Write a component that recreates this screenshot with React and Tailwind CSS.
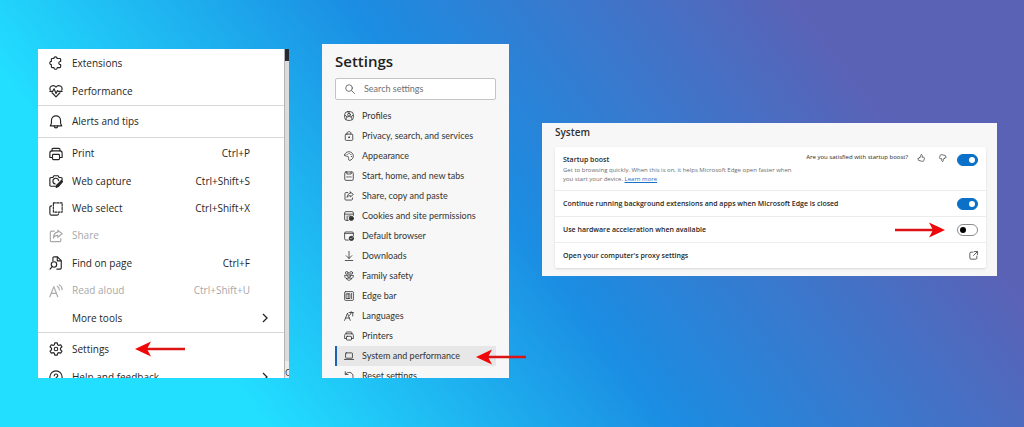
import { useState } from 'react';
import clsx from 'clsx';

const ICONS = {
  puzzle: (
    <path d="M5.600 2.900c-.2-2.600 3.800-2.600 3.600 0h3.200c.5 0 .9.4.9.9v2.500c-2.800-.5-2.800 3.900 0 3.600v2.500c0 .5-.4.9-.9.9H9.400c.3 2.500-4 2.500-3.700 0H3.600c-.5 0-.9-.4-.9-.9V9.900c-2.400.2-2.400-3.900 0-3.700V3.800c0-.5.4-.9.9-.9z" />
  ),
  heart: (
    <>
      <path d="M1.500 7C-.4 2.800 5.200 0 8 3.500c2.800-3.500 8.400-.7 6.500 3.500M3.500 10 8 14.700l4.500-4.700" />
      <path d="M1 8.500h3.200l1.600-3 2.200 5.400 1.700-3.400.8 1H15" />
    </>
  ),
  bell: (
    <>
      <path d="M8 1C4.900 1 2.800 3.200 2.800 6.200v3.300L1.500 12.500h13l-1.300-3V6.200C13.200 3.200 11.100 1 8 1z" />
      <path d="M6 12.700c.2 2.700 3.800 2.700 4 0" />
    </>
  ),
  printer: (
    <>
      <path d="M3.500 4.500V2.700C3.500 1.800 4.100 1.500 4.700 1.500h6.600c.6 0 1.200.3 1.200 1.200v1.800" />
      <path d="M4 12H1V7c0-1.700.8-2.500 2.200-2.500h9.600C14.200 4.500 15 5.300 15 7v5h-3" />
      <rect x="4" y="8.500" width="8" height="6" rx="1" />
    </>
  ),
  capture: (
    <>
      <path d="M8 14H2.200C1.500 14 1 13.500 1 12.800V5.200C1 4.500 1.500 4 2.200 4h2.300l1-2h5l1 2h2.300c.7 0 1.200.5 1.200 1.200v1.600" />
      <path d="M7.200 11.400A3.300 3.300 0 1 1 11 7.500" />
      <path d="m14.300 7.300 1.300 1.300-5 5.700-2.400 1 .6-2.500z" fill="currentColor" />
    </>
  ),
  select: (
    <>
      <path d="M5 1h10v10.500H5z" strokeDasharray="2.300 1.500" />
      <path d="M3 4.500c-1.400 0-2 .6-2 1.500v7c0 1.300.8 2 2 2h6c1 0 1.800-.5 2-1.500" />
    </>
  ),
  share: (
    <>
      <path d="M6 2.500H3c-1 0-1.500.6-1.500 1.500v9c0 1 .6 1.500 1.500 1.500h9c1 0 1.500-.6 1.500-1.500v-2" />
      <path d="M10 1.500 15 5.500 10 9.500V7.300C7.600 7.200 6 8 5 10.300c.2-3.900 2-6.400 5-6.700z" />
    </>
  ),
  find: (
    <>
      <path d="M4.500 5.500V2.200C4.500 1.500 5 1 5.700 1h4L14 5.300v8.500c0 .7-.5 1.200-1.200 1.200H9" />
      <path d="M9.500 1.300v4.200h4.200" />
      <circle cx="5.700" cy="9.700" r="3.100" />
      <path d="M3.500 12.100 1.200 15" />
    </>
  ),
  aloud: <path d="M1 14.500 5.500 3 10 14.500M2.600 10.700h5.800M9.500 2.500c1.600 1 2.300 2.400 2.300 4.300M11.800 1c2.200 1.300 3.200 3.200 3.200 5.600" />,
  gear: (
    <>
      <path d="M6.600 1h2.800l.4 2.100 1.500.8 2.100-.7 1.400 2.400-1.700 1.500v1.800l1.700 1.500-1.400 2.400-2.100-.7-1.500.8L9.400 15H6.600l-.4-2.100-1.500-.8-2.100.7-1.400-2.400 1.700-1.500V7.100L1.200 5.600l1.400-2.400 2.100.7 1.500-.8z" />
      <circle cx="8" cy="8" r="2" />
    </>
  ),
  help: (
    <>
      <circle cx="8" cy="8" r="7" />
      <path d="M6 6.500c0-2.600 4-2.600 4 0C10 8 8 8 8 9.500M8 11.500v.5" />
    </>
  ),
  search: (
    <>
      <circle cx="6.500" cy="6.500" r="5.300" />
      <path d="m10.500 10.500 4.700 4.700" />
    </>
  ),
  profile: (
    <>
      <rect x="1" y="1" width="14" height="14" rx="5" />
      <circle cx="8" cy="6" r="2.200" />
      <path d="M8 1v2.800M3.500 13c.2-4.300 2-4 4.500-4s4.300-.3 4.500 4M2 7l3 2.500M14 7l-3 2.500" />
    </>
  ),
  lock: (
    <>
      <rect x="2" y="5" width="12" height="10" rx="1.500" />
      <path d="M5 5V3.500c0-3.300 6-3.300 6 0V5" />
      <circle cx="8" cy="10" r=".8" fill="currentColor" />
    </>
  ),
  palette: (
    <>
      <path d="M1 6.500C2 2 6.500.3 10 1.500c4.500 1.500 6.100 6.500 4 10-1.300 2.200-4.500 4.200-6 3.200-1.900-1.300.3-4-1-5.500C5.500 7.500 1.900 9.900 1 6.500z" />
      <path d="M5 5.200h.1M8 4h.1M11 5.500h.1M12 8.700h.1" strokeWidth="1.800" />
    </>
  ),
  tabs: (
    <>
      <rect x="1.200" y="1.500" width="13.600" height="13.500" rx="2" />
      <path d="M4.500 1.500v3.300h7V1.500M4.500 9.500H7M9 9.500h2.500" />
    </>
  ),
  cookies: (
    <>
      <path d="M7 15H3c-1.200 0-2-.8-2-2V3c0-1.200.8-2 2-2h10c1.200 0 2 .8 2 2v4M1 5h14M5 8v7M7.500 8h3" />
      <circle cx="11.800" cy="11.800" r="3.400" fill="currentColor" />
    </>
  ),
  browser: (
    <>
      <path d="M7 14.500H3c-1.200 0-2-.8-2-2V3.500c0-1.200.8-2 2-2h10c1.200 0 2 .8 2 2V8M1 3.800h14" />
      <circle cx="11.800" cy="11.800" r="3.500" fill="currentColor" />
      <path d="m10.300 11.800 1.200 1.200 2-2.200" stroke="#f7f7f7" strokeWidth="1" />
    </>
  ),
  download: <path d="M8 0v12M3.500 7.500 8 12l4.500-4.500M2 15.200h12" />,
  family: (
    <>
      <circle cx="4.500" cy="3" r="2.200" />
      <circle cx="11.500" cy="3" r="2.200" />
      <circle cx="8" cy="8" r="2.200" />
      <path d="M5 7H1c0 3.200 1.200 4.900 3.200 5.500M11 7h4c0 3.200-1.200 4.900-3.200 5.500M4.200 12c.5 4 7.100 4 7.600 0z" />
    </>
  ),
  edgebar: (
    <>
      <rect x="1" y="1" width="14" height="14" rx="1.500" />
      <path d="M4 4.500h5.500V12H4zM6.700 4.500V12M12 4v1.500M12 7.300v1.500M12 10.500V12" />
    </>
  ),
  languages: <path d="M1 15 5.500 3.500 10 15M2.600 11.200h5.800M8 2.500h7M11.500 1c0 3-1 5-2.500 6M14 2.500V8" />,
  laptop: (
    <>
      <rect x="2.500" y="3" width="11" height="8.500" rx="1" />
      <path d="M.5 13.500h15" />
    </>
  ),
  reset: <path d="M2 1v4.500h4.500M2.300 5.300c3.200-5.500 12.200-3.500 12.200 3.100 0 6.200-8.300 9-12.200 3.800" />,
  thumbUp: (
    <path d="M5.500 7.300C7.200 5.500 7.500 4 7.600 2c.2-1.700 3-1.500 2.900 1.700l-.3 2.800h2.800c1.600 0 2.100 1 1.800 2.500l-1 3.800c-.3 1.400-1.300 2.200-2.800 1.900L3.300 13 1.700 9c1.700 0 2.700-.6 3.800-1.700z" />
  ),
  external: (
    <>
      <path d="M7 2H3.500c-1.200 0-2 .8-2 2v8.500c0 1.200.8 2 2 2H12c1.200 0 2-.8 2-2V9" />
      <path d="M9.500 1H15v5.500M15 1 8 8" />
    </>
  ),
};

const Icon = ({ name, className }) => (
  <svg
    viewBox="0 0 16 16"
    fill="none"
    stroke="currentColor"
    strokeWidth="1.3"
    strokeLinecap="round"
    strokeLinejoin="round"
    aria-hidden="true"
    className={clsx('shrink-0', className)}
  >
    {ICONS[name]}
  </svg>
);

const Chevron = () => (
  <svg viewBox="0 0 8 12" fill="none" stroke="currentColor" strokeWidth="1.3" aria-hidden="true" className="h-3 w-2 shrink-0">
    <path d="m2 2 4 4-4 4" />
  </svg>
);

const Arrow = ({ className }) => (
  <svg viewBox="0 0 50 16" aria-hidden="true" className={clsx('pointer-events-none absolute h-4 w-[50px]', className)}>
    <path d="M11 8h39" stroke="#dc1414" strokeWidth="2.600" />
    <path d="M0 8 16 .6 12 8l4 7.400z" fill="#f00808" />
  </svg>
);

const MenuItem = ({ icon, label, shortcut, disabled, submenu, children }) => (
  <button
    type="button"
    disabled={disabled}
    className="relative flex w-full items-center pr-[15px] pl-[11px] text-left text-[#262626] disabled:text-[#a8a8a8]"
  >
    <span className="w-[23px] shrink-0">{icon && <Icon name={icon} className="size-[14px]" />}</span>
    <span className="flex-1">{label}</span>
    {shortcut && <span className="pr-[19px]">{shortcut}</span>}
    {submenu && <Chevron />}
    {children}
  </button>
);

const BrowserMenu = () => (
  <section className="mt-[49px] flex bg-white text-[10px]" aria-label="Browser menu">
    <div className="min-w-0 flex-1 divide-y divide-[#d6d6d6]">
      <div className="grid min-h-[57px] auto-rows-fr">
        <MenuItem icon="puzzle" label="Extensions" />
        <MenuItem icon="heart" label="Performance" />
      </div>
      <div className="grid min-h-8">
        <MenuItem icon="bell" label="Alerts and tips" />
      </div>
      <div className="grid min-h-[195px] auto-rows-fr pt-[2px]">
        <MenuItem icon="printer" label="Print" shortcut="Ctrl+P" />
        <MenuItem icon="capture" label="Web capture" shortcut="Ctrl+Shift+S" />
        <MenuItem icon="select" label="Web select" shortcut="Ctrl+Shift+X" />
        <MenuItem icon="share" label="Share" disabled />
        <MenuItem icon="find" label="Find on page" shortcut="Ctrl+F" />
        <MenuItem icon="aloud" label="Read aloud" shortcut="Ctrl+Shift+U" disabled />
        <MenuItem label="More tools" submenu />
      </div>
      <div className="pt-[2px]">
        <div className="grid min-h-7">
          <MenuItem icon="gear" label="Settings">
            <Arrow className="left-[97px]" />
          </MenuItem>
        </div>
        <div className="h-[15px] overflow-hidden">
          <div className="grid min-h-7">
            <MenuItem icon="help" label="Help and feedback" submenu />
          </div>
        </div>
      </div>
    </div>
    {/* sliver of the page behind the menu */}
    <div className="flex w-[5px] flex-col justify-between border-l border-[#b4b4b4] bg-[#dcdcdc]">
      <div className="h-3 bg-[#262b33]" />
      <div className="h-[17px] overflow-hidden bg-[#ececec] pt-[6px] text-[9px] leading-3 text-[#303030]">C</div>
    </div>
  </section>
);

const NAV = [
  ['profile', 'Profiles'],
  ['lock', 'Privacy, search, and services'],
  ['palette', 'Appearance'],
  ['tabs', 'Start, home, and new tabs'],
  ['share', 'Share, copy and paste'],
  ['cookies', 'Cookies and site permissions'],
  ['browser', 'Default browser'],
  ['download', 'Downloads'],
  ['family', 'Family safety'],
  ['edgebar', 'Edge bar'],
  ['languages', 'Languages'],
  ['printer', 'Printers'],
  ['laptop', 'System and performance'],
  ['reset', 'Reset settings'],
];

const SettingsNav = () => (
  <section className="mt-11 bg-[#f7f7f7] px-[13px] pt-2">
    <h2 className="text-[15px] leading-[18px] font-semibold text-[#202020]">Settings</h2>
    <label className="mt-2 flex h-[22px] items-center rounded-xs border border-[#c4c4c4] bg-white px-[9px]">
      <Icon name="search" className="size-[10px] text-[#555]" />
      <input
        type="search"
        aria-label="Search settings"
        placeholder="Search settings"
        className="ml-[9px] min-w-0 flex-1 font-[Lato,sans-serif] text-[9px] outline-none placeholder:text-[#707070]"
      />
    </label>
    <nav className="mt-[6px] font-[Lato,sans-serif] text-[9px] text-[#333]">
      {NAV.map(([icon, label]) => {
        const active = icon === 'laptop';
        const last = icon === 'reset';
        return (
          <div key={label} className={clsx('relative', last && 'h-3 overflow-hidden')}>
            <a
              href="#"
              aria-current={active ? 'page' : undefined}
              className={clsx('flex h-5 items-center gap-2 border-l-2 pl-[7px]', active ? 'border-[#1b62b5] bg-[#e7e7e7]' : 'border-transparent')}
            >
              <Icon name={icon} className="size-[10px]" />
              <span className="whitespace-nowrap">{label}</span>
            </a>
            {active && <Arrow className="top-[3px] left-[141px]" />}
          </div>
        );
      })}
    </nav>
  </section>
);

const Toggle = ({ id, checked, onChange }) => (
  <input
    id={id}
    type="checkbox"
    role="switch"
    checked={checked}
    onChange={onChange}
    className="flex h-3 w-[21px] shrink-0 appearance-none items-center rounded-full border border-[#8c8c8c] bg-white px-[2px] before:size-[6px] before:rounded-full before:bg-black checked:justify-end checked:border-[#0a70c8] checked:bg-[#0a70c8] checked:before:bg-white"
  />
);

const SystemPanel = () => {
  const [values, setValues] = useState({ boost: true, background: true, hardware: false });
  const toggle = key => setValues(current => ({ ...current, [key]: !current[key] }));

  return (
    <section className="mt-[123px] bg-[#f7f7f7] pt-[3px] pr-[11px] pb-2 pl-[13px]">
      <h2 className="text-[10px] leading-[13px] font-semibold text-[#303030]">System</h2>
      <div className="mt-2 divide-y divide-[#ececec] rounded-xs bg-white text-[7px] leading-3 font-semibold text-[#262626] shadow-sm">
        <div className="min-h-11 pt-[7px] pr-2 pl-[8px]">
          <div className="flex items-start">
            <label htmlFor="boost" className="flex-1">Startup boost</label>
            <span className="text-[6px] leading-[6px] font-normal whitespace-nowrap">Are you satisfied with startup boost?</span>
            <button type="button" aria-label="Yes" className="ml-[9px]">
              <Icon name="thumbUp" className="size-2" />
            </button>
            <button type="button" aria-label="No" className="mr-[10px] ml-[14px]">
              <Icon name="thumbUp" className="size-2 rotate-180" />
            </button>
            <Toggle id="boost" checked={values.boost} onChange={() => toggle('boost')} />
          </div>
          <p className="w-[240px] text-[6px] leading-[9px] font-normal text-[#6c6c6c]">
            Get to browsing quickly. When this is on, it helps Microsoft Edge open faster when you start your device.{' '}
            <a href="#" className="text-[#1a6fc9] underline">Learn more</a>
          </p>
        </div>
        <div className="flex min-h-[26px] items-center pr-2 pl-[8px]">
          <label htmlFor="background" className="flex-1">Continue running background extensions and apps when Microsoft Edge is closed</label>
          <Toggle id="background" checked={values.background} onChange={() => toggle('background')} />
        </div>
        <div className="relative flex min-h-[26px] items-center pr-2 pl-[8px]">
          <label htmlFor="hardware" className="flex-1">Use hardware acceleration when available</label>
          <Arrow className="right-[41px] rotate-180" />
          <Toggle id="hardware" checked={values.hardware} onChange={() => toggle('hardware')} />
        </div>
        <a href="#" className="flex min-h-[25px] items-center justify-between pr-2 pl-[8px]">
          Open your computer&apos;s proxy settings
          <Icon name="external" className="size-[9px]" />
        </a>
      </div>
    </section>
  );
};

const App = () => (
  <main className="grid min-h-screen grid-cols-[minmax(0,251fr)_minmax(0,187fr)_minmax(0,455fr)] items-start gap-x-[33px] bg-[linear-gradient(53deg,#22deff_20%,#1b8de2_50%,#5a62b6_83%)] pr-[27px] pb-12 pl-[38px] font-['Open_Sans','Noto_Sans',sans-serif]">
    <BrowserMenu />
    <SettingsNav />
    <SystemPanel />
  </main>
);

export default App;
